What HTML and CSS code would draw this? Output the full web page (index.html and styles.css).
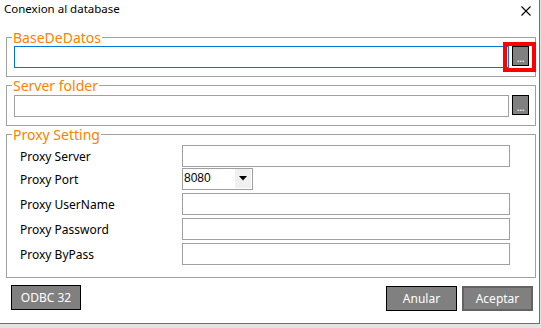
FILE: index.html
```html
<!DOCTYPE html>
<html lang="es">
<head>
<meta charset="utf-8">
<title>Conexion al database</title>
<link rel="stylesheet" href="styles.css">
</head>
<body>
<div class="window">
  <div class="titlebar">
    <span class="title">Conexion al database</span>
    <svg class="close" width="10" height="10" viewBox="0 0 10 10"><path d="M0.5 0.5 L9.5 9.5 M9.5 0.5 L0.5 9.5" stroke="#000" stroke-width="1.1" fill="none"/></svg>
  </div>

  <fieldset class="group">
    <legend>BaseDeDatos</legend>
    <div class="pathrow pathrow-first">
      <div class="field field-focus"></div>
      <div class="browse-wrap">
        <button class="browse">...</button>
        <span class="highlight"></span>
      </div>
    </div>
  </fieldset>

  <fieldset class="group">
    <legend>Server folder</legend>
    <div class="pathrow pathrow-second">
      <div class="field"></div>
      <div class="browse-wrap">
        <button class="browse">...</button>
      </div>
    </div>
  </fieldset>

  <fieldset class="group">
    <legend>Proxy Setting</legend>
    <div class="proxy">
      <div class="prow prow-first"><span class="plabel">Proxy Server</span><div class="field"></div></div>
      <div class="prow"><span class="plabel">Proxy Port</span>
        <div class="select"><span class="select-value">8080</span><span class="select-arrow"><svg width="8" height="5" viewBox="0 0 8 5"><path d="M0 0 H8 L4 4.5 Z" fill="#000"/></svg></span></div>
      </div>
      <div class="prow"><span class="plabel">Proxy UserName</span><div class="field"></div></div>
      <div class="prow"><span class="plabel">Proxy Password</span><div class="field"></div></div>
      <div class="prow"><span class="plabel">Proxy ByPass</span><div class="field"></div></div>
    </div>
  </fieldset>

  <div class="footer">
    <button class="btn btn-odbc">ODBC 32</button>
    <div class="actions">
      <button class="btn btn-cancel">Anular</button>
      <button class="btn btn-ok">Aceptar</button>
    </div>
  </div>
</div>
</body>
</html>
```

FILE: styles.css
```css
* { box-sizing: border-box; }

html, body {
  margin: 0;
  padding: 0;
}

body {
  width: 541px;
  height: 328px;
  background: #e3e3e3;
  font-family: "Noto Sans", "Open Sans", sans-serif;
  font-size: 12px;
  color: #000;
  overflow: hidden;
}

.window {
  width: 540px;
  height: 324px;
  background: #fff;
  border-right: 1px solid #6e6e6e;
  border-bottom: 1px solid #6e6e6e;
  display: flex;
  flex-direction: column;
}

.titlebar {
  height: 29px;
  display: flex;
  justify-content: space-between;
  align-items: flex-start;
  padding: 1px 8px 0 4px;
}

.title {
  font-size: 11.5px;
  line-height: 16px;
}

.close {
  margin-top: 5px;
  display: block;
}

.group {
  margin: 0 3px 0 6px;
  padding: 0;
  border: 1px solid #a0a0a0;
  min-width: 0;
}

.group legend {
  margin-left: 5px;
  padding: 0 1px;
  font-size: 14px;
  line-height: 17px;
  color: #ff8000;
}

.pathrow {
  display: flex;
  align-items: flex-start;
  gap: 3px;
  padding: 0 6px 8px 7px;
}

.pathrow-second {
  padding-top: 1px;
}

.field {
  flex: 1;
  height: 22px;
  border: 1px solid #a0a0a0;
  background: #fff;
}

.field-focus {
  border-color: #0078d7;
}

.browse-wrap {
  position: relative;
  width: 17px;
  height: 20px;
}

.browse {
  display: block;
  width: 17px;
  height: 20px;
  margin: 0;
  padding: 0;
  border: 1px solid #000;
  background: #808080;
  color: #fff;
  font-family: "Noto Sans", sans-serif;
  font-size: 11px;
  line-height: 22px;
  text-align: center;
  letter-spacing: -0.5px;
}

.highlight {
  position: absolute;
  left: -9px;
  top: -4px;
  width: 33px;
  height: 30px;
  border: 4px solid #ff0000;
  pointer-events: none;
}

.proxy {
  display: flex;
  flex-direction: column;
  gap: 3px;
  padding: 0 25px 14px 13px;
}

.prow {
  display: grid;
  grid-template-columns: 162px 1fr;
  align-items: center;
  height: 22px;
}

.prow-first {
  margin-bottom: -2px;
}

.plabel {
  line-height: 22px;
  padding-top: 3px;
  white-space: nowrap;
}

.select {
  width: 71px;
  height: 22px;
  border: 1px solid #a0a0a0;
  display: flex;
  align-items: stretch;
  background: #fff;
}

.select-value {
  flex: 1;
  padding-left: 1px;
  font-family: "Liberation Sans", Arial, sans-serif;
  font-size: 12px;
  line-height: 19px;
}

.select-arrow {
  width: 16px;
  margin: 0 1px 1px 0;
  background: #f0f0f0;
  display: flex;
  align-items: center;
  justify-content: center;
}

.select-arrow svg {
  display: block;
}

.footer {
  display: flex;
  justify-content: space-between;
  align-items: flex-start;
  padding: 7px 6px 0 11px;
}

.actions {
  display: flex;
  gap: 5px;
  margin-top: 1px;
}

.btn {
  width: 70px;
  height: 25px;
  margin: 0;
  padding: 0;
  background: #808080;
  color: #fff;
  border: 1px solid #000;
  font-family: "Noto Sans", sans-serif;
  font-size: 12px;
  line-height: 21px;
  text-align: center;
}

.btn-cancel,
.btn-ok {
  width: 71px;
}

.btn-ok {
  border: 2px solid #636363;
}
```
